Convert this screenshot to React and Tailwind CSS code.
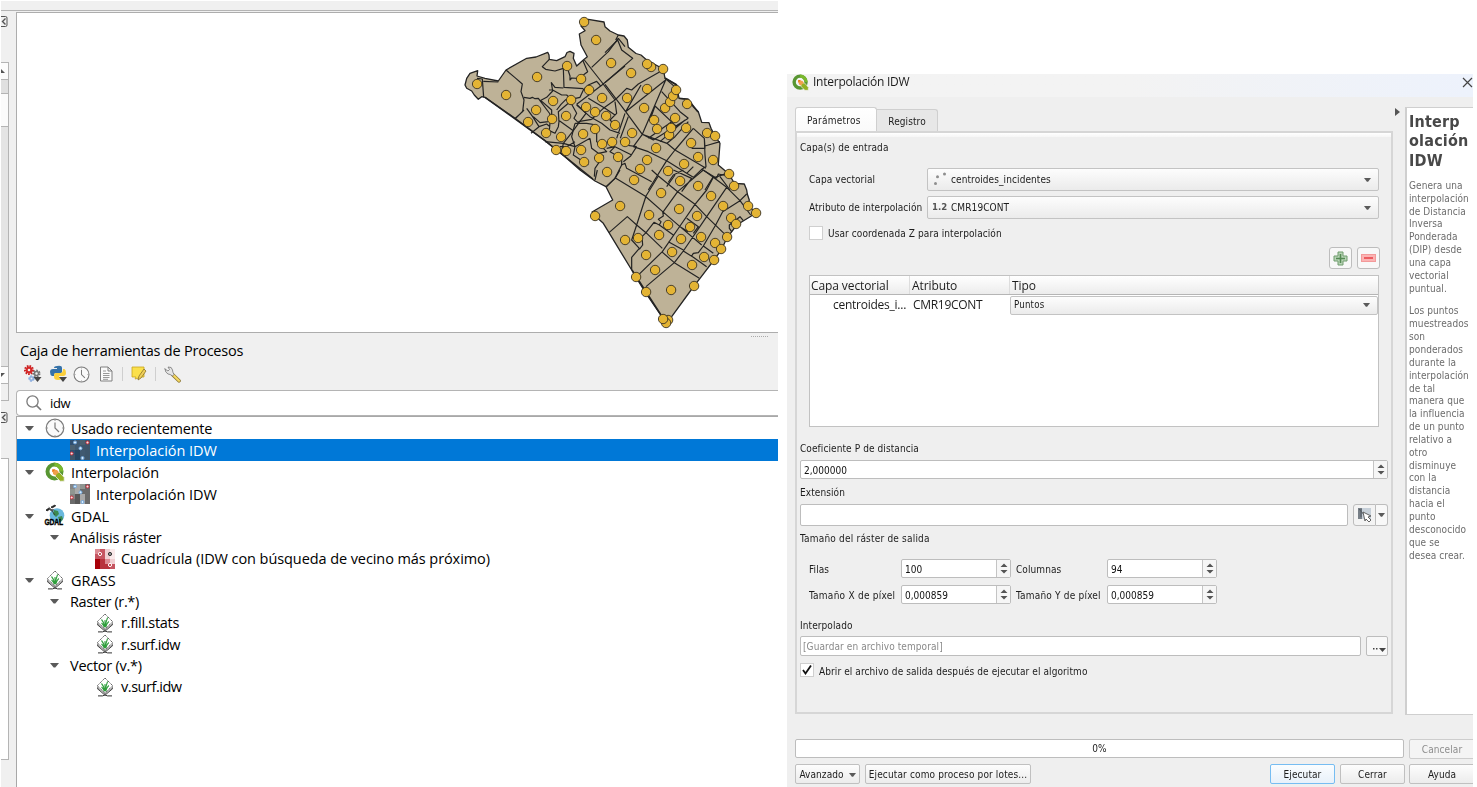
import React from "react";

const OUTLINE =
  "477.7,70.7 470,73.3 466.7,78.3 465,85 466.7,88.3 471.7,91 474.3,95 478.3,99.3 481.7,96.7 485,97.3 515,118.3 545,140.7 565,156.7 580,170 595,181 606,186.7 612.7,200 592,212 595,215.7 603.3,223.3 609,232.7 631.7,270 636.7,278.3 646,293.3 660.7,315 663.3,319 666,323.3 671.7,316.7 694,286 700,278.3 714,260 721.7,249.3 726.7,238.3 736.7,225 751.7,215.7 756,213.3 748,205 749.3,200 747.3,194 746.7,190 744.3,184 734.3,183.3 729,174 718.3,165 720,143.3 715,136 711,128.3 709,122.7 701.7,122.3 698.3,111.7 693.3,106.7 688.3,99.3 679,98.3 676.7,85 665,78.3 663.3,69 646.7,60 641,55 636,53.5 628.3,47.3 627.3,40 624,36 618.3,35 610,31 605,26.7 604,22 588.3,19.3 584,22 581,26 585,30.7 579.3,34 581,45 587.3,56.7 583.3,60 576.7,66 573.3,58.3 574,53.3 570,51.3 567,52.5 565,56.7 556.7,60.7 549.3,59.3 549,55 547.7,52.3 536,57 526.7,58.3 506,70 498.3,81 485,78.3 477,76";

const REGIONS = [
  {
    transform: "translate(455 10) scale(.33333)",
    d: "M66 205 82 207 84 235 86 262 M85 214 130 216 M153 180 180 203 202 222 198 245 207 270 203 305 180 325 M207 262 225 265 232 262 240 266 250 265 255 272 275 262 293 243 289 218 300 232 325 234 M283 148 262 170 272 178 300 183 325 175 327 232 385 236 M340 183 345 198 345 210 350 204 377 206 M383 150 398 185 378 200 M282 240 293 240 320 255 335 255 348 268 375 262 385 240 400 225 425 214 432 222 438 230 M388 150 440 216 480 270 M490 85 460 125 410 172 M490 85 510 110 M490 75 482 90 M510 168 440 226 365 283 M215 295 233 320 252 350 228 370 M207 300 182 325 M255 272 285 312 280 335 255 338 235 320 M258 272 290 300 290 327 M305 300 318 283 333 268 M285 338 283 362 300 370 310 350 312 335 310 305 340 280 350 283 365 310 357 325 372 340 M310 330 355 362 325 400 270 395 M355 362 372 338 393 310 365 283 M325 400 320 425 M325 400 360 410 M252 350 275 342 285 350",
  },
  {
    transform: "translate(560 70) scale(.33333)",
    d: "M165 90 130 115 95 148 M50 105 90 140 125 160 150 180 180 190 M195 130 170 205 M205 140 181 205 M165 95 170 130 150 150 165 165 M85 85 135 115 165 135 M230 230 195 225 180 212 M215 255 165 230 140 235 M165 230 150 245 185 265 185 285 165 325 140 350 M185 285 195 280 200 295 275 335 M230 230 212 258 190 275 M45 160 35 200 45 230 90 205 M45 160 80 160 110 165 110 215 140 245 115 250 95 235 90 205 M45 230 40 255 85 285 M115 250 130 258 105 295 103 320 M0 230 20 230 45 215 M55 155 95 148",
  },
  {
    transform: "translate(605 40) scale(.33333)",
    d: "M0 38 38 0 50 30 83 55 0 128 M0 133 62 215 112 283 186 310 210 330 265 265 M62 215 182 120 112 283 M174 90 100 132 80 150 65 145 30 180 M108 135 62 215 M85 320 112 283 M85 320 130 335 185 362 245 400 265 412 290 388 330 412 365 400 M112 283 145 300 250 235 M150 198 215 260 M170 155 225 215 250 235 M180 115 215 145 M130 295 215 235 M165 305 240 240 M186 310 210 290 250 245 M150 198 135 240 M265 265 298 295 300 325 260 325 M298 295 300 345 303 380 290 388 M300 318 345 305 M185 362 130 450 M210 330 185 362 M210 330 303 385 M245 400 265 380 M185 440 210 405 M300 450 325 410 M345 410 375 450",
  },
  {
    transform: "translate(540 170) scale(.33333)",
    d: "M165 30 172 0 M198 50 225 25 240 0 M225 23 315 78 368 125 420 170 485 225 M620 72 600 92 548 125 527 165 490 228 475 248 460 250 455 258 M560 52 500 140 430 243 403 278 318 350 M520 22 500 60 465 103 420 168 367 245 290 320 M490 0 413 65 370 125 M355 18 318 78 290 165 275 210 298 235 275 262 275 300 M207 188 262 140 290 165 318 188 342 157 358 165 363 155 355 148 370 138 368 125 M298 238 308 225 306 200 318 188 M318 188 367 235 M358 165 400 195 M385 215 430 240 M335 0 355 18 413 65 465 103 500 140 562 200 M385 37 400 15 430 0 M400 0 455 25 425 65 M490 0 520 22 560 52 600 92 632 135 M520 22 530 24 535 12 565 18 M403 278 478 325 M430 243 460 262 500 290 M403 278 365 245 M440 145 475 170 460 190 M445 185 420 170 M575 185 568 175 568 165 600 140 610 152 M490 228 520 250",
  },
];

const POINTS = [
  [584, 22], [596, 40], [611, 63], [567, 66], [581, 79], [537, 77], [477, 84], [506, 95], [589, 90], [602, 98],
  [553, 101], [571, 100], [586, 107], [595, 112], [606, 116], [536, 110], [566, 116], [528, 122], [552, 119], [615, 125],
  [595, 129], [546, 133], [583, 134], [561, 137], [612, 142], [602, 144], [556, 150], [566, 151], [581, 150], [599, 158],
  [618, 157], [584, 162], [607, 172], [631, 73], [651, 67], [647, 64], [663, 69], [647, 89], [627, 98],
  [665, 108], [670, 102], [673, 96], [676, 90], [687, 104], [644, 108], [675, 118], [654, 120], [657, 129], [669, 135],
  [671, 128], [686, 128], [707, 133], [715, 136], [632, 133], [625, 142], [656, 148], [691, 143], [647, 160],
  [698, 157], [713, 160], [640, 169], [684, 164], [668, 171], [634, 180], [680, 181], [729, 174], [698, 186], [734, 186],
  [661, 193], [711, 196], [620, 206], [595, 216], [679, 209], [723, 206], [748, 206], [756, 213], [649, 215], [697, 216],
  [731, 218], [736, 224], [668, 225], [690, 227], [659, 235], [625, 240], [638, 238], [681, 239], [701, 237], [727, 237],
  [715, 243], [721, 249], [672, 252], [646, 255], [704, 257], [714, 260], [692, 265], [655, 270], [636, 277], [646, 292],
  [671, 290], [694, 286], [668, 320], [666, 323], [663, 319],
];

function DistrictMap() {
  return (
    <svg className="block h-[319px] w-[761px]" viewBox="17 13 761 319">
      <polygon points={OUTLINE} fill="#beb297" stroke="#232323" strokeWidth="1.3" strokeLinejoin="round" />
      <path d="M485 97.3 545 140.7 593 179 M632 270 661 315 M665 78 677 85 M679 98.3 688 99.3 698 112" fill="none" stroke="#232323" strokeWidth="1.5" />
      {REGIONS.map((r) => (
        <path key={r.transform} transform={r.transform} d={r.d} fill="none" stroke="#232323" strokeWidth="3.6" strokeLinejoin="round" />
      ))}
      {POINTS.map(([x, y]) => (
        <circle key={`${x}-${y}`} cx={x + 0.1} cy={y} r="4.7" fill="#e4b434" stroke="#3a3222" strokeWidth="0.9" />
      ))}
    </svg>
  );
}

function Down({ className = "h-[5px] w-[9px]" }) {
  return (
    <svg className={`block shrink-0 ${className}`} viewBox="0 0 9 5">
      <path d="M0 0h9L5.3 4.6H3.7z" fill="#5a5a5a" />
    </svg>
  );
}

function QgisIcon({ className }) {
  return (
    <svg className={className} viewBox="0 0 20 20">
      <circle cx="9.5" cy="9.5" r="7" fill="none" stroke="#589632" strokeWidth="4" />
      <path d="M9.5 2.5a7 7 0 0 1 7 7" fill="none" stroke="#7ab82e" strokeWidth="3.6" />
      <path d="M10.5 10.5h4.2l4.5 5v3.7h-4l-4.7-4.6z" fill="#93b023" stroke="#f0f0f0" strokeWidth=".8" />
      <path d="M8 8h4l2 2.2-3.6 3.4L8 12z" fill="#f0a04b" />
      <path d="M7.2 7.2h3.4l-3.4 3.4z" fill="#ee7913" />
    </svg>
  );
}

function ClockIcon({ className }) {
  return (
    <svg className={className} viewBox="0 0 20 20" fill="none" stroke="#7b7b7b">
      <circle cx="10" cy="10" r="8.8" fill="#fafafa" strokeWidth="1.2" />
      <path d="M10 4.5V10l4 4" strokeWidth="1.2" />
      <path d="M10 2v1M10 17v1M2 10h1M17 10h1" strokeWidth=".8" />
    </svg>
  );
}

function IdwIcon({ selected }) {
  const c = selected
    ? ["#2f4f70", "#405970", "#4b6070", "#3d566c", "#254765"]
    : ["#858585", "#a9a9a9", "#909590", "#6b6b6b", "#585858"];
  return (
    <svg className="block size-5 shrink-0" viewBox="0 0 20 20">
      <rect width="20" height="20" fill={c[3]} />
      <path d="M0 0h5v5H0zM0 10h5v5H0z" fill={c[0]} />
      <path d="M5 0h5v10h5v10h-5V10H5z" fill={c[1]} />
      <path d="M10 0h5v5h-5zM0 5h5v5H0zM5 15h5v5H5z" fill={c[2]} />
      <path d="M5 10h5v10H5z" fill={c[4]} />
      <g fill="#d8ecfb" stroke="#6fa5dc" strokeWidth="1">
        <circle cx="5" cy="2.4" r="1.5" />
        <circle cx="10.5" cy="8.3" r="1.5" />
        <circle cx="12.5" cy="18" r="1.5" />
      </g>
      <g fill="#fbe0e0" stroke="#c92d3a" strokeWidth="1">
        <circle cx="17.5" cy="2.5" r="1.5" />
        <circle cx="1.7" cy="13.5" r="1.5" />
      </g>
    </svg>
  );
}

function GridIcon() {
  return (
    <svg className="block size-5 shrink-0" viewBox="0 0 20 20">
      <rect width="20" height="20" fill="#c65561" />
      <path d="M10 0h10v15h-5v-5h-5z" fill="#f0cfd2" />
      <path d="M15 0h5v10h-5z" fill="#fae9ea" />
      <path d="M0 0h5v5H0zM10 10h5v5h-5z" fill="#dc8b93" />
      <path d="M0 10h5v10H0z" fill="#a80009" />
      <path d="M5 10h5v10H5zM10 15h5v5h-5z" fill="#b8333d" />
      <circle cx="5" cy="5" r="1.6" fill="#c23a44" stroke="#fff" />
      <circle cx="15" cy="5" r="1.6" fill="#999" stroke="#333" />
      <circle cx="15" cy="16" r="1.6" fill="#c23a44" stroke="#fff" />
    </svg>
  );
}

function GdalIcon() {
  return (
    <svg className="block size-5 shrink-0 overflow-visible" viewBox="0 0 20 20">
      <circle cx="12" cy="9.5" r="7.3" fill="#69b8dd" />
      <path d="M9 4l4 1 1 3-3 3-3-3zM13 11l4-1 1 3-3 4z" fill="#3c8a50" />
      <path d="M1 4l3-2 1 1-3 2zM6 1l4-2 .6 1L7 2z" fill="#222" stroke="#222" strokeWidth=".8" />
      <path d="M3.5 .6l2.8 2.4 3 .4-2 2.2L5 4.4z" fill="#555" />
      <path d="M7 5l3 4" stroke="#333" strokeWidth=".8" />
      <text x="-.5" y="19" fontFamily="Liberation Sans, sans-serif" fontWeight="700" fontSize="9" textLength="18.5" lengthAdjust="spacingAndGlyphs" fill="#000" stroke="#000" strokeWidth=".4">GDAL</text>
    </svg>
  );
}

function GrassIcon() {
  return (
    <svg className="block size-5 shrink-0" viewBox="0 0 20 20">
      <path d="M10 4.2L17.8 11.5 10 18.2 2.2 11.5z" fill="#f4f4f4" stroke="#333" strokeWidth=".9" />
      <path d="M10 2.5L17.8 10.2 10 17 2.2 10.2z" fill="#fff" stroke="#666" strokeWidth=".8" />
      <path d="M10 1L17.8 8.8 10 15.8 2.2 8.8z" fill="#fff" stroke="#555" strokeWidth=".9" strokeDasharray="1.5 .6" />
      <path d="M10 14.5V7M9.6 14Q9 9 6.500 6.500M10.4 14Q11 8 12.6 4.5M9.3 14Q8 11 6.5 10M10.7 14Q12 10 13.8 8.5" fill="none" stroke="#2f9e3c" strokeWidth="1.1" />
      <path d="M3 18.9h4.5L10 18l2.500.9H17" fill="none" stroke="#333" />
    </svg>
  );
}

const TREE = [
  { h: "h-[22px]", pad: "pl-[8px]", open: true, icon: <ClockIcon className="block size-5" />, text: "Usado recientemente", t: "tracking-[-0.24px]" },
  { h: "h-[22px]", pad: "pl-[53px]", icon: <IdwIcon selected />, text: "Interpolación IDW", selected: true, t: "tracking-[-0.03px]" },
  { h: "h-[22px]", pad: "pl-[8px]", open: true, icon: <QgisIcon className="block size-5" />, text: "Interpolación", t: "tracking-[-0.14px]" },
  { h: "h-[22px]", pad: "pl-[53px]", icon: <IdwIcon />, text: "Interpolación IDW", t: "tracking-[-0.03px]" },
  { h: "h-[22px]", pad: "pl-[8px]", open: true, icon: <GdalIcon />, text: "GDAL", t: "tracking-[0.1px]" },
  { h: "h-[21px]", pad: "pl-[33px]", open: true, text: "Análisis ráster", t: "tracking-[-0.22px]" },
  { h: "h-[21px]", pad: "pl-[78px]", icon: <GridIcon />, text: "Cuadrícula (IDW con búsqueda de vecino más próximo)", t: "tracking-[-0.08px]" },
  { h: "h-[22px]", pad: "pl-[8px]", open: true, icon: <GrassIcon />, text: "GRASS", t: "tracking-[0.05px]" },
  { h: "h-[21px]", pad: "pl-[33px]", open: true, text: "Raster (r.*)", t: "tracking-[-0.36px]" },
  { h: "h-[21px]", pad: "pl-[78px]", icon: <GrassIcon />, text: "r.fill.stats", t: "tracking-[-0.3px]" },
  { h: "h-[22px]", pad: "pl-[78px]", icon: <GrassIcon />, text: "r.surf.idw", t: "tracking-[-0.48px]" },
  { h: "h-[21px]", pad: "pl-[33px]", open: true, text: "Vector (v.*)", t: "tracking-[-0.26px]" },
  { h: "h-[21px]", pad: "pl-[78px]", icon: <GrassIcon />, text: "v.surf.idw", t: "tracking-[-0.46px]" },
];

function TreeRow({ row }) {
  return (
    <div className={`flex shrink-0 items-center ${row.h} ${row.pad} ${row.selected ? "bg-[#0078d7] text-white" : ""}`}>
      {row.open && <Down className="mr-[11px] h-[5px] w-[9px]" />}
      {row.icon}
      <span className={`whitespace-pre pt-px ${row.t} ${row.icon ? "ml-[6px]" : ""}`}>{row.text}</span>
    </div>
  );
}

function CloseBox() {
  return (
    <svg className="block h-[11px] w-[7px]" viewBox="0 0 7 11" fill="none" stroke="#555">
      <path d="M0 .5h4.5a1.5 1.5 0 0 1 1.5 1.5v7a1.5 1.5 0 0 1-1.5 1.5H0" />
      <path d="M4.5 2.5L1.5 5.5 4.5 8.5" strokeWidth="1.4" />
    </svg>
  );
}

function LeftStrip() {
  return (
    <div className="flex w-[15px] shrink-0 flex-col items-start pt-[4px]">
      <CloseBox />
      <div className="mt-[35px] flex h-[339px] w-[8px] flex-col border-y border-r border-[#b4b4b4] bg-[#e4e4e4]">
        <div className="flex h-[17px] items-center border-b border-[#b4b4b4] bg-[#fcfcfc]">
          <svg className="block h-1 w-1" viewBox="0 0 4 4"><path d="M0 0l4 4H0z" fill="#555" /></svg>
        </div>
        <div className="h-[13px] bg-[#e0e0e0]" />
        <div className="h-[34px] border-y border-[#b4b4b4] bg-[#fbfbfb]" />
        <div className="flex-1" />
        <div className="flex h-[18px] items-center border-y border-[#b4b4b4] bg-[#fcfcfc]">
          <svg className="block h-1 w-1" viewBox="0 0 4 4"><path d="M0 0h4L0 4z" fill="#555" /></svg>
        </div>
        <div className="h-[16px] bg-[#f0f0f0]" />
      </div>
      <div className="mt-[11px]"><CloseBox /></div>
      <div className="mt-[35px] h-[302px] w-[8px] border-y border-r border-[#b4b4b4] bg-white" />
    </div>
  );
}

function Toolbar() {
  return (
    <div className="flex h-[24px] items-center pl-[8px]">
      <svg className="block h-[18px] w-[19px]" viewBox="0 0 19 18">
        <g fill="none" strokeDasharray="1.6 1.1">
          <circle cx="5" cy="5" r="4" stroke="#c92020" strokeWidth="2" />
          <circle cx="12.5" cy="8.5" r="3" stroke="#777" strokeWidth="2" />
          <circle cx="7.5" cy="13.5" r="2.2" stroke="#8fb0df" strokeWidth="2" />
        </g>
        <circle cx="5" cy="5" r="2.4" fill="none" stroke="#d42626" strokeWidth="2.2" />
        <circle cx="12.5" cy="8.5" r="2" fill="none" stroke="#777" strokeWidth="1.5" />
        <circle cx="7.5" cy="13.5" r="1.8" fill="none" stroke="#8fb0df" strokeWidth="1.4" />
        <path d="M9.5 12h8L13.5 17z" fill="#444" />
      </svg>
      <svg className="ml-[7px] block h-[18px] w-[18px]" viewBox="0 0 18 18">
        <path d="M7 1q5-1 5 2v4q0 1-1.500 1H6Q4 8 4 11H2Q0 10 0 7q0-3 3-3h4V3H4q0-2 3-2z" fill="#3672a8" />
        <path d="M13 4h1.500q1.500 1 1.500 4t-3 3H9v1h3q0 3-4 3t-4-3V10q0-2 2-2h4.500Q13 8 13 4z" fill="#fbcf3b" />
        <path d="M9 12h8L13 17z" fill="#444" />
      </svg>
      <ClockIcon className="ml-[5px] block size-[17px]" />
      <svg className="ml-[9px] block h-[16px] w-[14px]" viewBox="0 0 14 16" fill="#fafafa" stroke="#808080">
        <path d="M1.500 1h7.500l4 4v10H1.500z M9 1v4h4" />
        <path d="M4 5h3M4 7.5h6.5M4 9.5h6.5M4 11.5h6.5M4 13.3h5" strokeWidth=".8" />
      </svg>
      <div className="ml-[9px] h-[14px] w-px bg-[#cfcfcf]" />
      <svg className="ml-[8px] block h-[16px] w-[16px]" viewBox="0 0 16 16">
        <path d="M1 1h12v10H8v1L4 13 5 11H1z" fill="#fbe04b" stroke="#c9a51d" strokeWidth=".8" />
        <path d="M7 14l1-4 5-7 2 2-5 7z" fill="#f0cf5a" stroke="#8a732b" strokeWidth=".8" />
      </svg>
      <div className="ml-[8px] h-[14px] w-px bg-[#cfcfcf]" />
      <svg className="ml-[8px] block h-[17px] w-[17px]" viewBox="0 0 17 17" fill="none" strokeLinecap="round">
        <path d="M9 9L15 14.8" stroke="#8a732b" strokeWidth="3.6" />
        <path d="M9.5 9.3L15 14.8" stroke="#f3d760" strokeWidth="2.2" />
        <path d="M1 3l3 2 1.500-1.500L4 1q4-.5 4.500 3 0 2 1.500 4.500L8.500 10Q6 8 4 8 1 6.500 1 3z" fill="#e5e5e5" stroke="#777" strokeWidth=".8" />
      </svg>
    </div>
  );
}

function LeftWindow() {
  return (
    <div className="flex h-[787px] w-[778px] shrink-0 flex-col overflow-hidden border-l border-t border-white bg-[#f0f0f0] font-['Open_Sans','Noto_Sans',sans-serif] text-[14.5px] tracking-[-0.22px] text-black">
      <div className="h-[10px] shrink-0 border-b border-[#b4b4b4]" />
      <div className="flex min-h-0 flex-1 pt-px">
        <LeftStrip />
        <div className="flex min-w-0 flex-1 flex-col">
          <div className="h-[321px] shrink-0 border-y border-l border-[#adadad] bg-white">
            <DistrictMap />
          </div>
          <div className="flex h-[6px] items-center justify-end pr-[10px]">
            <div className="w-[17px] border-t border-dotted border-[#aaa]" />
          </div>
          <div className="flex h-[23px] items-center pl-[4px]">Caja de herramientas de Procesos</div>
          <Toolbar />
          <div className="mt-[4px] flex h-[26px] shrink-0 items-center rounded-l-sm border-y border-l border-[#b4b4b4] bg-white pl-[9px] text-[13px] tracking-[-0.4px]">
            <svg className="block size-[16px]" viewBox="0 0 16 16" fill="none" stroke="#7a7a7a" strokeWidth="1.3">
              <circle cx="6.5" cy="6.5" r="5.6" />
              <path d="M10.5 10.5L15 15" strokeWidth="1.7" />
            </svg>
            <span className="ml-[8px] pt-[2px]">idw</span>
          </div>
          <div className="flex min-h-0 flex-1 flex-col border-l border-t border-[#a8a8a8] bg-white">
            {TREE.map((row, i) => (
              <TreeRow key={i} row={row} />
            ))}
          </div>
        </div>
      </div>
    </div>
  );
}

function Combo({ children, className = "" }) {
  return (
    <div className={`flex items-center rounded-[2px] border border-[#c3c3c3] bg-linear-to-b from-[#fdfdfd] to-[#ebebeb] pr-[7px] ${className}`}>
      <div className="flex flex-1 items-center whitespace-pre">{children}</div>
      <Down className="h-[4px] w-[7px]" />
    </div>
  );
}

function Spin({ value, className = "" }) {
  return (
    <div className={`flex h-[19px] items-stretch rounded-[2px] border border-[#bdbdbd] bg-white ${className}`}>
      <span className="flex flex-1 items-center pl-[3px] pt-px tracking-[0px] text-[#111]">{value}</span>
      <span className="flex w-[14px] items-center justify-center border-l border-[#c4c4c4] bg-[#f6f6f6]">
        <svg className="block h-[11px] w-[8px]" viewBox="0 0 8 11">
          <path d="M.5 4L4 .5 7.5 4zM.5 7h7L4 10.5z" fill="#555" />
        </svg>
      </span>
    </div>
  );
}

function Button({ children, className = "" }) {
  return (
    <div className={`flex h-[20px] shrink-0 items-center justify-center whitespace-pre rounded-[2px] border pt-px ${className}`}>{children}</div>
  );
}

const plain = "border-[#c0c0c0] bg-linear-to-b from-[#fdfdfd] to-[#ececec]";

function Parameters() {
  return (
    <div className="flex h-[583px] flex-col border-2 border-[#d6d6d6] bg-[#efefef] pl-[3px]">
      <div className="-ml-[3px] h-[4px] shrink-0 bg-linear-to-b from-white to-[#f6f6f6]" />
      <div className="mt-[2px] flex h-[16px] shrink-0 items-center">Capa(s) de entrada</div>
      <div className="ml-[9px] mt-[13px] flex h-[23px] shrink-0 items-center">
        <span className="w-[118px]">Capa vectorial</span>
        <Combo className="h-[23px] w-[452px]">
          <svg className="ml-[5px] mr-[3px] block size-[15px]" viewBox="0 0 15 15" fill="#8e8e8e">
            <circle cx="2.5" cy="11.5" r="1.5" /><circle cx="4.5" cy="4.8" r="1.5" /><circle cx="11.5" cy="2" r="1.5" />
          </svg>
          centroides_incidentes
        </Combo>
      </div>
      <div className="ml-[9px] mt-[5px] flex h-[23px] shrink-0 items-center">
        <span className="w-[118px] whitespace-nowrap tracking-[0.05px]">Atributo de interpolación</span>
        <Combo className="h-[23px] w-[452px]">
          <span className="w-[23px] pl-[4px] text-[9.5px] font-bold tracking-[0px] text-[#555]">1.2</span>
          CMR19CONT
        </Combo>
      </div>
      <div className="ml-[9px] mt-[7px] flex h-[14px] shrink-0 items-center">
        <span className="size-[14px] border border-[#cfcfcf] bg-white" />
        <span className="ml-[5px] pt-px">Usar coordenada Z para interpolación</span>
      </div>
      <div className="mr-[11px] mt-[7px] flex h-[22px] shrink-0 justify-end gap-[5px]">
        <div className="flex w-[23px] items-center justify-center rounded-[3px] border border-[#bdbdbd] bg-[#f8f8f8]">
          <svg className="block size-[15px]" viewBox="0 0 15 15">
            <path d="M5 1h5v4h4v5h-4v4H5v-4H1V5h4z" fill="#b9d4b7" stroke="#6f9c6d" />
            <path d="M7.5 3v9M3 7.5h9" stroke="#548a53" strokeWidth="1.6" />
          </svg>
        </div>
        <div className="flex w-[23px] items-center justify-center rounded-[3px] border border-[#bdbdbd] bg-[#f8f8f8]">
          <svg className="block h-[8px] w-[15px]" viewBox="0 0 15 8">
            <rect x=".5" y=".5" width="14" height="7" fill="#fbb3b3" stroke="#f39a9a" />
            <path d="M3 4h9" stroke="#ec5c60" strokeWidth="2" />
          </svg>
        </div>
      </div>
      <div className="ml-[9px] mt-[6px] h-[152px] w-[570px] shrink-0 border border-[#c2c2c2] bg-white font-['Open_Sans','Noto_Sans',sans-serif] text-[12px] tracking-[-0.1px]">
        <div className="flex h-[19px] items-center border-b border-[#b5b5b5] bg-linear-to-b from-white to-[#ececec]">
          <span className="w-[100px] border-r border-[#ddd] pl-px pt-px leading-[17px]">Capa vectorial</span>
          <span className="w-[100px] border-r border-[#ddd] pl-[2px] pt-px leading-[17px]">Atributo</span>
          <span className="pl-[2px] pt-px leading-[17px]">Tipo</span>
        </div>
        <div className="flex h-[20px] items-center">
          <span className="w-[103px] pl-[23px] tracking-[-0.25px]">centroides_i...</span>
          <span className="w-[97px] tracking-[-0.3px]">CMR19CONT</span>
          <Combo className="h-[19px] flex-1 pl-[3px] font-['DejaVu_Sans_Condensed','DejaVu_Sans',sans-serif] text-[9.6px] tracking-[0.2px]">Puntos</Combo>
        </div>
      </div>
      <div className="mt-[13px] flex h-[16px] shrink-0 items-center">Coeficiente P de distancia</div>
      <Spin value="2,000000" className="mt-[4px] w-[588px] shrink-0" />
      <div className="mt-[5px] flex h-[16px] shrink-0 items-center">Extensión</div>
      <div className="mt-[4px] flex h-[22px] shrink-0">
        <div className="w-[548px] rounded-[2px] border border-[#bdbdbd] bg-white" />
        <div className="ml-[5px] flex w-[23px] items-center justify-center rounded-l-[3px] border border-[#bdbdbd] bg-[#f3f3f3]">
          <svg className="block size-[16px]" viewBox="0 0 16 16">
            <rect x="1" y="1" width="13" height="11" fill="#c7d0d9" />
            <path d="M1 1h4v11H1z" fill="#777f87" />
            <path d="M2 2l7 8M4 2v8" stroke="#555c64" />
            <path d="M6 5l8 4-3 1 3 3-2 2-3-3-1 2z" fill="#fff" stroke="#555" strokeWidth=".9" />
          </svg>
        </div>
        <div className="flex w-[12px] items-center justify-center rounded-r-[3px] border border-l-0 border-[#bdbdbd] bg-[#f8f8f8]">
          <Down className="h-[4px] w-[7px]" />
        </div>
      </div>
      <div className="mt-[4px] flex h-[16px] shrink-0 items-center tracking-[0.2px]">Tamaño del ráster de salida</div>
      <div className="ml-[9px] mt-[13px] flex h-[19px] shrink-0 items-center">
        <span className="w-[92px] pt-px">Filas</span>
        <Spin value="100" className="w-[110px]" />
        <span className="ml-[5px] w-[91px] pt-px">Columnas</span>
        <Spin value="94" className="w-[110px]" />
      </div>
      <div className="ml-[9px] mt-[7px] flex h-[19px] shrink-0 items-center whitespace-nowrap">
        <span className="w-[92px] pt-px tracking-[0.25px]">Tamaño X de píxel</span>
        <Spin value="0,000859" className="w-[110px]" />
        <span className="ml-[5px] w-[91px] pt-px tracking-[0.2px]">Tamaño Y de píxel</span>
        <Spin value="0,000859" className="w-[110px]" />
      </div>
      <div className="mt-[13px] flex h-[16px] shrink-0 items-center pt-px">Interpolado</div>
      <div className="mt-[3px] flex h-[20px] shrink-0">
        <div className="flex w-[561px] items-center rounded-[2px] border border-[#bdbdbd] bg-white pl-[2px] pt-px text-[#8a8a8a]">[Guardar en archivo temporal]</div>
        <div className="ml-[5px] flex w-[22px] items-end justify-end rounded-[2px] border border-[#bdbdbd] bg-[#f8f8f8] pb-[3px] pr-px">
          <svg className="block h-[5px] w-[14px]" viewBox="0 0 14 5" fill="#444">
            <path d="M1 1h1.5v1.5H1zM4 1h1.5v1.5H4zM7 1h7l-3.5 4z" />
          </svg>
        </div>
      </div>
      <div className="mt-[7px] flex h-[14px] shrink-0 items-center">
        <span className="flex size-[14px] items-center justify-center border border-[#cfcfcf] bg-white">
          <svg className="block size-[10px]" viewBox="0 0 10 10"><path d="M1 5l2.5 3.5L9 .5" fill="none" stroke="#111" strokeWidth="1.8" /></svg>
        </span>
        <span className="ml-[5px] pt-[2px]">Abrir el archivo de salida después de ejecutar el algoritmo</span>
      </div>
    </div>
  );
}

function Dialog() {
  return (
    <div className="ml-[9px] mt-[74px] flex h-[713px] w-[686px] shrink-0 flex-col overflow-hidden bg-[#efefef] font-['DejaVu_Sans_Condensed','DejaVu_Sans',sans-serif] text-[10px] tracking-[0.09px] text-[#1c1c1c] blur-[0.35px]">
      <div className="flex h-[23px] shrink-0 items-center bg-linear-to-r from-[#f3f3f3] from-50% to-[#edf2fc] pb-[7px] pl-[5px] font-['Open_Sans','Noto_Sans',sans-serif] text-[12px] tracking-[-0.24px]">
        <QgisIcon className="block size-[17px]" />
        <span className="ml-[4px] flex-1">Interpolación IDW</span>
        <svg className="block size-[11px]" viewBox="0 0 11 11"><path d="M1 1l9 9M10 1l-9 9" stroke="#444" strokeWidth="1.2" /></svg>
      </div>
      <div className="flex h-[617px] shrink-0 pl-[8px] pt-[10px]">
        <div className="w-[598px] shrink-0">
          <div className="flex h-[24px] items-end">
            <div className="flex h-[24px] w-[82px] items-center rounded-t-[3px] border-x border-t border-[#cfcfcf] bg-linear-to-b from-white to-[#fafafa] pl-[11px] pt-px tracking-[0.25px]">Parámetros</div>
            <div className="flex h-[22px] w-[61px] items-center justify-center rounded-tr-[3px] border-r border-t border-[#cfcfcf] bg-[#e7e7e7] pt-px">Registro</div>
          </div>
          <Parameters />
        </div>
        <div className="flex w-[12px] shrink-0 pl-[2px] pt-[1px]">
          <svg className="block h-[8px] w-[5px]" viewBox="0 0 5 8"><path d="M0 0l5 4-5 4z" fill="#555" /></svg>
        </div>
        <div className="h-[608px] flex-1 border-y border-l-2 border-[#cfcfcf] bg-white pl-[2px] pt-[4px] tracking-[0.08px]">
          <h1 className="text-[16px] font-bold leading-[19.3px] tracking-[0.2px] text-[#484848]">Interp<br />olación<br />IDW</h1>
          <p className="mt-[10px] whitespace-pre leading-[12.85px] text-[#6c6c6c]">{"Genera una\ninterpolación\nde Distancia\nInversa\nPonderada\n(DIP) desde\nuna capa\nvectorial\npuntual."}</p>
          <p className="mt-[10px] whitespace-pre leading-[12.85px] text-[#6c6c6c]">{"Los puntos\nmuestreados\nson\nponderados\ndurante la\ninterpolación\nde tal\nmanera que\nla influencia\nde un punto\nrelativo a\notro\ndisminuye\ncon la\ndistancia\nhacia el\npunto\ndesconocido\nque se\ndesea crear."}</p>
        </div>
      </div>
      <div className="mt-[25px] flex h-[19px] shrink-0 pl-[8px]">
        <div className="flex w-[609px] shrink-0 items-center justify-center rounded-[2px] border border-[#bdbdbd] bg-white">0%</div>
        <Button className="ml-[5px] w-[66px] border-[#cdcdcd] bg-[#f4f4f4] text-[#8d8d8d]">Cancelar</Button>
      </div>
      <div className="mt-[6px] flex h-[20px] shrink-0 pl-[8px]">
        <Button className={`w-[65px] gap-[5px] ${plain}`}>Avanzado <Down className="-ml-[3px] h-[4px] w-[7px]" /></Button>
        <Button className={`ml-[5px] w-[166px] tracking-[0.14px] ${plain}`}>Ejecutar como proceso por lotes...</Button>
        <Button className="ml-[239px] w-[65px] border-[#76bdf2] bg-linear-to-b from-[#fafdff] to-[#e8f1fa]">Ejecutar</Button>
        <Button className={`ml-[5px] w-[65px] ${plain}`}>Cerrar</Button>
        <Button className={`ml-[4px] w-[66px] ${plain}`}>Ayuda</Button>
      </div>
    </div>
  );
}

export default function App() {
  return (
    <div className="flex h-[787px] w-[1477px] overflow-hidden bg-white">
      <LeftWindow />
      <Dialog />
    </div>
  );
}
